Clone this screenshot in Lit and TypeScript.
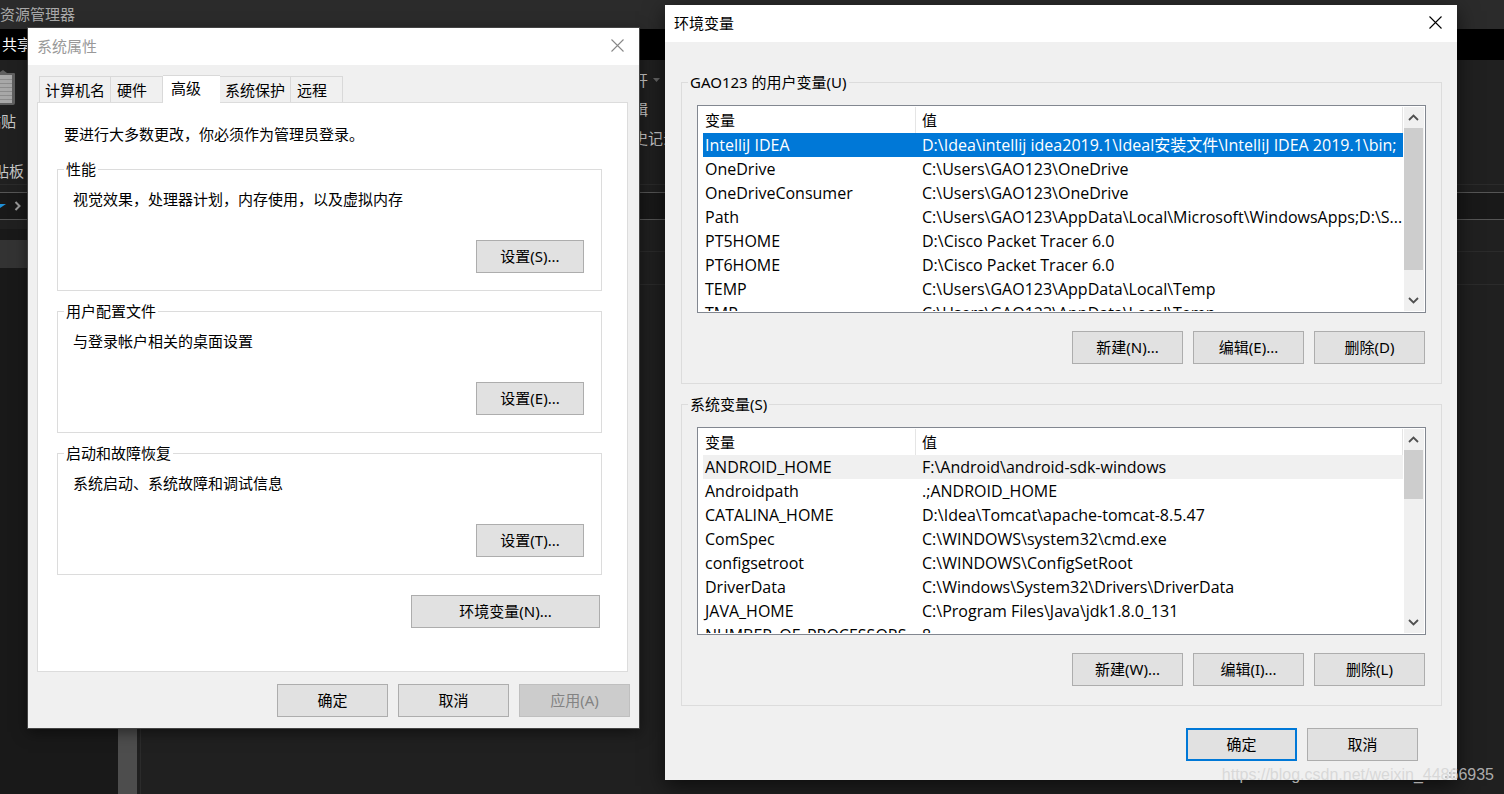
import { LitElement, html, svg, css } from "lit";
import { customElement, property } from "lit/decorators.js";

interface Variable {
  name: string;
  value: string;
}

const userVariables: Variable[] = [
  { name: "IntelliJ IDEA", value: "D:\\Idea\\intellij idea2019.1\\Ideal安装文件\\IntelliJ IDEA 2019.1\\bin;" },
  { name: "OneDrive", value: "C:\\Users\\GAO123\\OneDrive" },
  { name: "OneDriveConsumer", value: "C:\\Users\\GAO123\\OneDrive" },
  { name: "Path", value: "C:\\Users\\GAO123\\AppData\\Local\\Microsoft\\WindowsApps;D:\\S..." },
  { name: "PT5HOME", value: "D:\\Cisco Packet Tracer 6.0" },
  { name: "PT6HOME", value: "D:\\Cisco Packet Tracer 6.0" },
  { name: "TEMP", value: "C:\\Users\\GAO123\\AppData\\Local\\Temp" },
  { name: "TMP", value: "C:\\Users\\GAO123\\AppData\\Local\\Temp" },
];

const systemVariables: Variable[] = [
  { name: "ANDROID_HOME", value: "F:\\Android\\android-sdk-windows" },
  { name: "Androidpath", value: ".;ANDROID_HOME" },
  { name: "CATALINA_HOME", value: "D:\\Idea\\Tomcat\\apache-tomcat-8.5.47" },
  { name: "ComSpec", value: "C:\\WINDOWS\\system32\\cmd.exe" },
  { name: "configsetroot", value: "C:\\WINDOWS\\ConfigSetRoot" },
  { name: "DriverData", value: "C:\\Windows\\System32\\Drivers\\DriverData" },
  { name: "JAVA_HOME", value: "C:\\Program Files\\Java\\jdk1.8.0_131" },
  { name: "NUMBER_OF_PROCESSORS", value: "8" },
];

const sections = [
  { title: "性能", text: "视觉效果，处理器计划，内存使用，以及虚拟内存", button: "设置(S)..." },
  { title: "用户配置文件", text: "与登录帐户相关的桌面设置", button: "设置(E)..." },
  { title: "启动和故障恢复", text: "系统启动、系统故障和调试信息", button: "设置(T)..." },
];

const closeIcon = svg`<svg width="13" height="13" viewBox="0 0 13 13" fill="none" stroke="currentColor" stroke-width="1.1"><path d="M.5 .5l12 12M12.5 .5l-12 12"/></svg>`;

const controls = css`
  * {
    box-sizing: border-box;
  }
  button {
    font: inherit;
    color: #000;
    margin: 0;
    padding: 0;
  }
  .push {
    width: 111px;
    height: 33px;
    padding-bottom: 2px;
    background: #e1e1e1;
    border: 1px solid #adadad;
  }
  .push:disabled {
    background: #ccc;
    border-color: #bfbfbf;
    color: #838383;
  }
  .push.default {
    border: 2px solid #0078d7;
  }
  fieldset {
    margin: 0;
    padding: 0;
    border: 1px solid #dcdcdc;
    min-width: 0;
  }
  legend {
    margin-left: 6px;
    padding: 0 2px;
    line-height: 20px;
  }
  .actions {
    display: flex;
    justify-content: flex-end;
    gap: 10px;
  }
`;

@customElement("explorer-backdrop")
export class ExplorerBackdrop extends LitElement {
  static styles = css`
    * {
      box-sizing: border-box;
    }
    :host {
      display: flex;
      flex-direction: column;
      background: #202020;
      color: #c8c8c8;
      white-space: nowrap;
      overflow: hidden;
    }
    .title {
      height: 29px;
      line-height: 29px;
      background: #2b2b2b;
      color: #aaa;
    }
    .menu {
      height: 31px;
      line-height: 31px;
      padding-left: 2px;
      background: #000;
      color: #fff;
    }
    .ribbon {
      display: flex;
      justify-content: space-between;
      height: 125px;
      border-bottom: 1px solid #2b2b2b;
    }
    .clipboard {
      display: flex;
      flex-direction: column;
      width: 24px;
      padding-top: 9px;
    }
    .clipboard svg {
      display: block;
    }
    .clipboard .paste {
      align-self: flex-start;
      width: 16px;
      display: flex;
      justify-content: flex-end;
      line-height: 20px;
      margin-top: 4px;
    }
    .clipboard .group {
      display: flex;
      justify-content: flex-end;
      line-height: 20px;
      margin-top: 30px;
    }
    .open {
      flex: 1;
      padding: 6px 0 0 594px;
      line-height: 29px;
    }
    .open svg {
      margin-left: 5px;
      vertical-align: 4px;
    }
    .address {
      margin-top: 7px;
      height: 28px;
      display: flex;
      align-items: center;
      border: solid #555;
      border-width: 1px 0;
      background: #191919;
    }
    .lower {
      flex: 1;
      display: flex;
      margin-top: 9px;
    }
    .tree {
      width: 118px;
      background: #191919;
      padding-top: 11px;
    }
    .item {
      height: 28px;
      background: #333;
    }
    .track {
      width: 19px;
      background: #4d4d4d;
    }
    .files {
      flex: 1;
      margin-left: 3px;
      border-left: 1px solid #2b2b2b;
    }
    .bar {
      height: 23px;
      border-bottom: 1px solid #2b2b2b;
    }
    .head {
      height: 33px;
      border-bottom: 1px solid #2b2b2b;
    }
  `;

  render() {
    return html`
      <div class="title">资源管理器</div>
      <div class="menu">共享</div>
      <div class="ribbon">
        <div class="clipboard">
          <svg width="16" height="38" viewBox="0 0 16 38">
            <path d="M0 3l3-2 4 3h7a1 1 0 0 1 1 1v29a2 2 0 0 1-2 2H0z" fill="#606060" />
            <path d="M0 6h12v28H0z" fill="#a8a8a8" />
            <path d="M0 10.500h12M0 14.500h12M0 18.500h12M0 22.500h12M0 26.500h12M0 30.500h12" stroke="#8c8c8c" />
          </svg>
          <div class="paste">粘贴</div>
          <div class="group">剪贴板</div>
        </div>
        <div class="open">
          <div>打开<svg width="8" height="4" viewBox="0 0 8 4"><path d="M0 0h7L3.500 4z" fill="#666" /></svg></div>
          <div>编辑</div>
          <div>历史记录</div>
        </div>
      </div>
      <div class="address">
        <svg width="24" height="14" viewBox="0 0 24 14">
          <path d="M0 5h6L0 9z" fill="#1e90d8" />
          <path d="M15.500 3l4 4-4 4" fill="none" stroke="#999" stroke-width="2" />
        </svg>
      </div>
      <div class="lower">
        <div class="tree"><div class="item"></div></div>
        <div class="track"></div>
        <div class="files">
          <div class="bar"></div>
          <div class="head"></div>
        </div>
      </div>
    `;
  }
}

@customElement("system-properties")
export class SystemProperties extends LitElement {
  static styles = [
    controls,
    css`
      :host {
        display: flex;
        flex-direction: column;
        box-sizing: border-box;
        background: #f0f0f0;
        outline: 1px solid #444;
        box-shadow: 0 4px 14px rgba(0, 0, 0, 0.5);
      }
      header {
        display: flex;
        align-items: center;
        justify-content: space-between;
        height: 37px;
        padding: 0 15px 2px 9px;
        background: #fff;
        color: #999;
      }
      .close {
        display: flex;
        border: 0;
        background: none;
        color: #888;
      }
      .tabs {
        display: flex;
        align-items: flex-end;
        padding: 10px 0 0 11px;
      }
      .tab {
        height: 26px;
        padding: 0 5px;
        border: 1px solid #d9d9d9;
        border-width: 1px 1px 0 0;
        background: #f0f0f0;
        text-align: left;
      }
      .tab:first-child {
        border-left-width: 1px;
      }
      .tab.short {
        padding: 0 15px 0 6px;
      }
      .tab.active {
        height: 28px;
        margin-bottom: -1px;
        padding: 0 19px 4px 8px;
        background: #fff;
        border-right-width: 0;
        z-index: 1;
      }
      .panel {
        display: flex;
        flex-direction: column;
        margin: 0 11px 0 9px;
        padding: 20px 25px 43px 19px;
        background: #fff;
        border: 1px solid #dcdcdc;
      }
      p {
        margin: 0;
        line-height: 22px;
      }
      .hint {
        padding-left: 7px;
        margin-bottom: 14px;
      }
      .section {
        margin-bottom: 10px;
      }
      .content {
        display: flex;
        flex-direction: column;
        gap: 30px;
        padding: 9px 17px 17px 15px;
      }
      .content .push {
        align-self: flex-end;
        width: 108px;
      }
      .env {
        align-self: flex-end;
        width: 189px;
        margin: 10px 2px 0 0;
      }
      footer {
        padding: 12px 9px 11px 0;
      }
    `,
  ];

  render() {
    return html`
      <header>
        <span>系统属性</span>
        <button class="close" aria-label="关闭">${closeIcon}</button>
      </header>
      <div class="tabs" role="tablist">
        <button class="tab" role="tab">计算机名</button>
        <button class="tab short" role="tab">硬件</button>
        <button class="tab active" role="tab" aria-selected="true">高级</button>
        <button class="tab" role="tab">系统保护</button>
        <button class="tab short" role="tab">远程</button>
      </div>
      <div class="panel" role="tabpanel">
        <p class="hint">要进行大多数更改，你必须作为管理员登录。</p>
        ${sections.map(
          (s) => html`
            <fieldset class="section">
              <legend>${s.title}</legend>
              <div class="content">
                <p>${s.text}</p>
                <button class="push">${s.button}</button>
              </div>
            </fieldset>
          `
        )}
        <button class="push env">环境变量(N)...</button>
      </div>
      <footer class="actions">
        <button class="push">确定</button>
        <button class="push">取消</button>
        <button class="push" disabled>应用(A)</button>
      </footer>
    `;
  }
}

@customElement("variable-list")
export class VariableList extends LitElement {
  @property({ attribute: false }) rows: Variable[] = [];
  @property({ type: Number }) thumb = 50;
  @property({ type: Boolean, reflect: true }) focused = false;

  static styles = [
    controls,
    css`
      :host {
        display: flex;
        box-sizing: border-box;
        height: 208px;
        padding: 1px 1px 1px 5px;
        border: 1px solid #828790;
        background: #fff;
      }
      .view {
        flex: 1;
        min-width: 0;
        overflow: hidden;
      }
      table {
        width: 100%;
        table-layout: fixed;
        border-collapse: separate;
        border-spacing: 0;
      }
      th,
      td {
        height: 24px;
        padding: 0 0 0 2px;
        line-height: 24px;
        text-align: left;
        font-weight: normal;
        white-space: nowrap;
        overflow: hidden;
      }
      td {
        font-family: "Open Sans", "Noto Sans CJK SC", sans-serif;
        font-size: 16px;
      }
      th {
        height: 26px;
        border-right: 1px solid #e5e5e5;
      }
      th:first-child {
        width: 213px;
      }
      th + th,
      td + td {
        padding-left: 6px;
      }
      .selected td {
        background: #f0f0f0;
      }
      :host([focused]) .selected td {
        background: #0078d7;
        color: #fff;
      }
      .scroll {
        display: flex;
        flex-direction: column;
        width: 20px;
        margin-left: 1px;
        background: #f0f0f0;
      }
      .arrow {
        display: flex;
        align-items: center;
        justify-content: center;
        width: 19px;
        height: 21px;
        border: 0;
        background: none;
        color: #505050;
      }
      .rail {
        flex: 1;
      }
      .thumb {
        width: 19px;
        background: #cdcdcd;
      }
    `,
  ];

  render() {
    return html`
      <div class="view">
        <table>
          <thead>
            <tr><th>变量</th><th>值</th></tr>
          </thead>
          <tbody>
            ${this.rows.map(
              (r, i) => html`<tr class=${i === 0 ? "selected" : ""}><td>${r.name}</td><td>${r.value}</td></tr>`
            )}
          </tbody>
        </table>
      </div>
      <div class="scroll">
        <button class="arrow" aria-label="向上滚动">
          <svg width="11" height="7" viewBox="0 0 11 7" fill="none" stroke="currentColor" stroke-width="1.800"><path d="M1 6l4.500-4.500L10 6" /></svg>
        </button>
        <div class="rail"><div class="thumb" style="height:${this.thumb}px"></div></div>
        <button class="arrow" aria-label="向下滚动">
          <svg width="11" height="7" viewBox="0 0 11 7" fill="none" stroke="currentColor" stroke-width="1.800"><path d="M1 1l4.500 4.500L10 1" /></svg>
        </button>
      </div>
    `;
  }
}

@customElement("environment-variables")
export class EnvironmentVariables extends LitElement {
  static styles = [
    controls,
    css`
      :host {
        display: flex;
        flex-direction: column;
        box-sizing: border-box;
        background: #f0f0f0;
        box-shadow: 0 6px 20px rgba(0, 0, 0, 0.6);
      }
      header {
        display: flex;
        align-items: center;
        justify-content: space-between;
        height: 37px;
        padding: 0 15px 2px 9px;
        background: #fff;
      }
      .close {
        display: flex;
        border: 0;
        background: none;
      }
      .groups {
        display: flex;
        flex-direction: column;
        gap: 10px;
        padding: 30px 15px 0 16px;
      }
      .content {
        display: flex;
        flex-direction: column;
        gap: 18px;
        padding: 13px 15px 19px;
      }
      .content .actions {
        padding-right: 1px;
      }
      footer {
        padding: 22px 39px 0 0;
      }
      .grip {
        display: flex;
        justify-content: flex-end;
        padding: 7px 2px 2px;
      }
    `,
  ];

  render() {
    return html`
      <header>
        <span>环境变量</span>
        <button class="close" aria-label="关闭">${closeIcon}</button>
      </header>
      <div class="groups">
        <fieldset>
          <legend>GAO123 的用户变量(U)</legend>
          <div class="content">
            <variable-list focused .rows=${userVariables} .thumb=${142}></variable-list>
            <div class="actions">
              <button class="push">新建(N)...</button>
              <button class="push">编辑(E)...</button>
              <button class="push">删除(D)</button>
            </div>
          </div>
        </fieldset>
        <fieldset>
          <legend>系统变量(S)</legend>
          <div class="content">
            <variable-list .rows=${systemVariables} .thumb=${49}></variable-list>
            <div class="actions">
              <button class="push">新建(W)...</button>
              <button class="push">编辑(I)...</button>
              <button class="push">删除(L)</button>
            </div>
          </div>
        </fieldset>
      </div>
      <footer class="actions">
        <button class="push default">确定</button>
        <button class="push">取消</button>
      </footer>
      <div class="grip">
        <svg width="10" height="10" viewBox="0 0 10 10" fill="#bfbfbf">
          <path d="M8 0h2v2H8zM4 4h2v2H4zM8 4h2v2H8zM0 8h2v2H0zM4 8h2v2H4zM8 8h2v2H8z" />
        </svg>
      </div>
    `;
  }
}

@customElement("app-root")
export class AppRoot extends LitElement {
  static styles = css`
    :host {
      display: grid;
      position: relative;
      min-height: 100vh;
      overflow: hidden;
      font: 15px "Noto Sans", "Noto Sans CJK SC", sans-serif;
      color: #000;
    }
    .window {
      position: absolute;
    }
    .properties {
      left: 28px;
      top: 28px;
      width: 611px;
    }
    .environment {
      left: 665px;
      top: 5px;
      width: 792px;
    }
    .watermark {
      position: absolute;
      right: 10px;
      bottom: 9px;
      font: 16px/20px "Liberation Sans", sans-serif;
      color: rgba(210, 210, 210, 0.8);
    }
  `;

  render() {
    return html`
      <explorer-backdrop></explorer-backdrop>
      <system-properties class="window properties"></system-properties>
      <environment-variables class="window environment"></environment-variables>
      <div class="watermark">https://blog.csdn.net/weixin_44866935</div>
    `;
  }
}
